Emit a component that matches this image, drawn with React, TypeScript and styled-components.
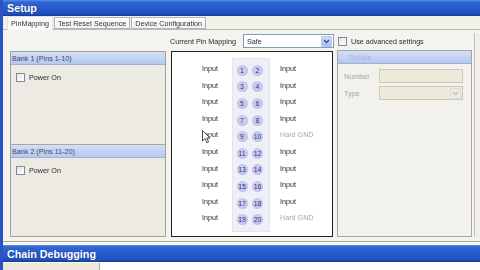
import React from "react";
import styled, { createGlobalStyle } from "styled-components";

const Global = createGlobalStyle`
  html, body { margin: 0; padding: 0; background: #ece9d8; }
  body { width: 480px; height: 270px; overflow: hidden; font-family: "Liberation Sans", Arial, sans-serif; }
  * { box-sizing: border-box; }
`;

const Frame = styled.div`
  position: relative;
  width: 480px;
  height: 270px;
  overflow: hidden;
  display: grid;
  grid-template-rows: 16px 14px 212px 3px 17px 8px;
  background: #ece9d8;
  border-left: 3px solid #2a52c4;
  font-size: 7.2px;
  color: #2a2a2a;
`;

const TitleBar = styled.div`
  height: 100%;
  padding-left: 4px;
  display: flex;
  align-items: center;
  color: #ffffff;
  font-weight: bold;
  font-size: 10.75px;
  background: linear-gradient(#5a8ee6 0px, #2f66d4 2px, #2659c8 55%, #2152bd 85%, #143a96 100%);
  text-shadow: 0 0 1px rgba(10, 30, 90, 0.6);
`;

const TabStrip = styled.div`
  display: flex;
  align-items: flex-end;
  padding-left: 4px;
  gap: 1px;
  background: #f1f0e9;
  border-bottom: 1px solid #b7b9b4;
`;

const Tab = styled.div<{ $active?: boolean }>`
  height: ${(p) => (p.$active ? "14px" : "12px")};
  margin-bottom: ${(p) => (p.$active ? "-1px" : "0")};
  padding: 0 3px;
  display: flex;
  align-items: center;
  white-space: nowrap;
  color: #333;
  filter: grayscale(1);
  background: ${(p) => (p.$active ? "#fbfbf9" : "linear-gradient(#ffffff, #f1f1ec)")};
  border: 1px solid ${(p) => (p.$active ? "#e4e3dc" : "#b3b5b0")};
  border-bottom: ${(p) => (p.$active ? "none" : "1px solid #b3b5b0")};
`;

const TabPage = styled.div`
  background: #f4f3ee;
  border-bottom: 1px solid #aca899;
  padding: 3px 0 0 7px;
  display: grid;
  grid-template-columns: 156px 164px 134px 1fr;
  grid-template-rows: 18px 186px;
  column-gap: 4px;
`;

const Spacer = styled.div`
  background: #f7f7f4;
`;

const Toolbar = styled.div`
  display: flex;
  align-items: center;
  gap: 4px;
  padding-bottom: 2px;
  white-space: nowrap;
`;

const Caption = styled.span`
  flex: none;
  white-space: nowrap;
  color: #2a2a2a;
  filter: grayscale(1);
`;

const ComboBox = styled.div<{ $disabled?: boolean }>`
  margin-left: auto;
  width: ${(p) => (p.$disabled ? "84px" : "91px")};
  height: 14px;
  flex: none;
  display: flex;
  align-items: center;
  justify-content: space-between;
  padding: 0 1px 0 3px;
  background: ${(p) => (p.$disabled ? "#ebeadb" : "#ffffff")};
  border: 1px solid ${(p) => (p.$disabled ? "#cbc9bc" : "#7f9db9")};
`;

const DropButton = styled.div<{ $disabled?: boolean }>`
  width: 11px;
  height: 11px;
  display: flex;
  align-items: center;
  justify-content: center;
  border-radius: 1px;
  background: ${(p) => (p.$disabled ? "#ecebe3" : "linear-gradient(#cddcfb, #a6bff5)")};
  border: 1px solid ${(p) => (p.$disabled ? "#dedcd2" : "#b4c7f1")};
`;

const CheckRow = styled.div`
  display: flex;
  align-items: center;
  gap: 4px;
  white-space: nowrap;
`;

const CheckBox = styled.span`
  width: 9px;
  height: 9px;
  flex: none;
  border: 1px solid #7f8b9e;
  background: linear-gradient(135deg, #e6e6e0, #ffffff);
`;

const LeftPanel = styled.div`
  border: 1px solid #a3a298;
  background: #eceae3;
  display: grid;
  grid-template-rows: 92px 1fr;
`;

const Bank = styled.div<{ $first?: boolean }>`
  display: flex;
  flex-direction: column;
  border-top: ${(p) => (p.$first ? "none" : "1px solid #a9a79e")};
`;

const SectionHeader = styled.div<{ $faded?: boolean }>`
  height: 13px;
  display: flex;
  align-items: center;
  padding-left: ${(p) => (p.$faded ? "11px" : "1px")};
  color: ${(p) => (p.$faded ? "#a9b6d8" : "#45465e")};
  background: linear-gradient(#d4dff7, #b6c8ef);
  border-bottom: 1px solid #9eb1db;
  white-space: nowrap;
`;

const BankBody = styled.div`
  padding: 8px 0 0 5px;
`;

const PinBox = styled.div`
  position: relative;
  margin: 0 1px;
  background: #ffffff;
  border: 1px solid #1e1e1e;
  padding-top: 6px;
  display: grid;
  grid-template-columns: 60px 38px 1fr;
  align-items: start;
`;

const LabelColumn = styled.div<{ $right?: boolean }>`
  display: flex;
  flex-direction: column;
  padding-top: 3px;
  text-align: ${(p) => (p.$right ? "left" : "right")};
  padding-left: ${(p) => (p.$right ? "10px" : "0")};
  padding-right: ${(p) => (p.$right ? "0" : "14px")};
  filter: grayscale(1);
`;

const PinLabel = styled.div<{ $muted?: boolean }>`
  height: 16.6px;
  line-height: 16.6px;
  white-space: nowrap;
  color: ${(p) => (p.$muted ? "#a8a8a8" : "#2a2a2a")};
`;

const PinColumn = styled.div`
  display: flex;
  flex-direction: column;
  padding: 3px 0;
  background: #efeff8;
  border: 1px solid #e4e4f0;
`;

const PinPair = styled.div`
  height: 16.6px;
  display: flex;
  align-items: center;
  gap: 4.5px;
  padding-left: 3.5px;
`;

const Pin = styled.span`
  width: 11px;
  height: 11px;
  border-radius: 50%;
  display: flex;
  align-items: center;
  justify-content: center;
  font-size: 6.8px;
  color: #2b2f7a;
  background: radial-gradient(circle at 50% 45%, #d6d5f6 0%, #c3c2ee 65%, #b2b1e6 100%);
`;

const RightPanel = styled.div`
  margin-left: -1px;
  margin-top: -1px;
  border: 1px solid #a8a69c;
  background: #f2f1eb;
  display: flex;
  flex-direction: column;
`;

const FormGrid = styled.div`
  display: grid;
  grid-template-columns: 35px 84px;
  grid-auto-rows: 14px;
  row-gap: 3px;
  padding: 5px 0 0 6px;
  align-items: center;
  color: #a6a6a0;
`;

const TextInput = styled.div`
  height: 14px;
  background: #ebeadb;
  border: 1px solid #cbc9bc;
`;

const EdgeStrip = styled.div`
  grid-column: 4;
  grid-row: 1 / span 2;
  margin-left: -2px;
  border-left: 1px solid #c3c1b6;
  background: #f1f0ea;
`;

const BottomRow = styled.div`
  display: grid;
  grid-template-columns: 97px 1fr;
`;

const BottomTab = styled.div`
  background: #ece9d8;
  border-right: 1px solid #a8a8a0;
  border-top: 1px solid #ffffff;
`;

const BottomPane = styled.div`
  background: #fdfdfd;
`;

const Cursor = styled.svg`
  position: absolute;
  left: 199px;
  top: 130px;
  width: 9px;
  height: 14px;
`;

const Chevron = ({ color }: { color: string }) => (
  <svg width="7" height="5" viewBox="0 0 7 5">
    <path d="M1 1 L3.5 3.5 L6 1" fill="none" stroke={color} strokeWidth="1.3" />
  </svg>
);

const leftLabels = Array.from({ length: 10 }, () => "Input");
const rightLabels = ["Input", "Input", "Input", "Input", "Hard GND", "Input", "Input", "Input", "Input", "Hard GND"];

export default function App() {
  return (
    <>
      <Global />
      <Frame>
        <TitleBar>Setup</TitleBar>
        <TabStrip>
          <Tab $active>PinMapping</Tab>
          <Tab>Test Reset Sequence</Tab>
          <Tab>Device Configuration</Tab>
        </TabStrip>
        <TabPage>
          <EdgeStrip />
          <div />
          <Toolbar>
            <Caption>Current Pin Mapping</Caption>
            <ComboBox>
              <Caption>Safe</Caption>
              <DropButton>
                <Chevron color="#3d4f7a" />
              </DropButton>
            </ComboBox>
          </Toolbar>
          <Toolbar>
            <CheckRow>
              <CheckBox />
              <Caption>Use advanced settings</Caption>
            </CheckRow>
          </Toolbar>
          <LeftPanel>
            <Bank $first>
              <SectionHeader>Bank 1 (Pins 1-10)</SectionHeader>
              <BankBody>
                <CheckRow>
                  <CheckBox />
                  <Caption>Power On</Caption>
                </CheckRow>
              </BankBody>
            </Bank>
            <Bank>
              <SectionHeader>Bank 2 (Pins 11-20)</SectionHeader>
              <BankBody>
                <CheckRow>
                  <CheckBox />
                  <Caption>Power On</Caption>
                </CheckRow>
              </BankBody>
            </Bank>
          </LeftPanel>
          <PinBox>
            <LabelColumn>
              {leftLabels.map((l, i) => (
                <PinLabel key={i}>{l}</PinLabel>
              ))}
            </LabelColumn>
            <PinColumn>
              {Array.from({ length: 10 }, (_, i) => (
                <PinPair key={i}>
                  <Pin>{i * 2 + 1}</Pin>
                  <Pin>{i * 2 + 2}</Pin>
                </PinPair>
              ))}
            </PinColumn>
            <LabelColumn $right>
              {rightLabels.map((l, i) => (
                <PinLabel key={i} $muted={l === "Hard GND"}>
                  {l}
                </PinLabel>
              ))}
            </LabelColumn>
          </PinBox>
          <RightPanel>
            <SectionHeader $faded>Details</SectionHeader>
            <FormGrid>
              <span>Number</span>
              <TextInput />
              <span>Type</span>
              <ComboBox $disabled>
                <span />
                <DropButton $disabled>
                  <Chevron color="#c4c3bb" />
                </DropButton>
              </ComboBox>
            </FormGrid>
          </RightPanel>
        </TabPage>
        <Spacer />
        <TitleBar>Chain Debugging</TitleBar>
        <BottomRow>
          <BottomTab />
          <BottomPane />
        </BottomRow>
        <Cursor viewBox="0 0 9 14">
          <path d="M0.5 0.5 L0.5 11 L3 8.6 L4.9 12.8 L6.6 12 L4.8 8 L8 8 Z" fill="#ffffff" stroke="#222" strokeWidth="0.8" />
        </Cursor>
      </Frame>
    </>
  );
}
